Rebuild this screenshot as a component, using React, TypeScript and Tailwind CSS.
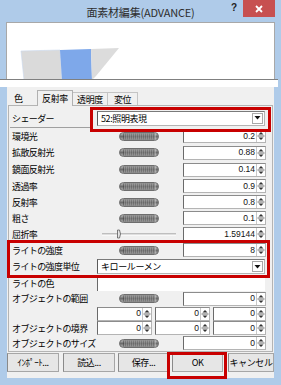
import React from "react";

const jp = "font-['Noto_Sans_CJK_JP',sans-serif]";

const Wheel: React.FC = () => {
  const ridges = [];
  for (let i = 0; i < 16; i++) {
    const x = 5 + i * 2;
    ridges.push(
      <line key={"d" + i} x1={x} y1="1.2" x2={x} y2="7.8" stroke="#333" strokeWidth="0.9" />
    );
    ridges.push(
      <line key={"l" + i} x1={x + 1} y1="1.5" x2={x + 1} y2="7.5" stroke="#e4e4e4" strokeWidth="0.7" />
    );
  }
  return (
    <svg width="40" height="9" viewBox="0 0 40 9" className="shrink-0">
      <defs>
        <linearGradient id="wheelGrad" x1="0" y1="0" x2="0" y2="1">
          <stop offset="0" stopColor="#cfcfcf" />
          <stop offset="0.5" stopColor="#6c6c6c" />
          <stop offset="1" stopColor="#bdbdbd" />
        </linearGradient>
      </defs>
      <rect x="0.5" y="0.5" width="39" height="8" rx="4" fill="url(#wheelGrad)" stroke="#6e6e6e" />
      {ridges}
    </svg>
  );
};

const Spin: React.FC = () => (
  <svg width="9" height="12" viewBox="0 0 9 12" className="shrink-0">
    <line x1="0.5" y1="0" x2="0.5" y2="12" stroke="#c8c8c8" />
    <polygon points="2.5,4.5 5,2 7.5,4.5" fill="#333" />
    <line x1="1.5" y1="6" x2="8.5" y2="6" stroke="#666" />
    <polygon points="2.5,7.5 5,10 7.5,7.5" fill="#333" />
  </svg>
);

const NumInput: React.FC<{ value: string; w?: string }> = ({ value, w = "w-[83px]" }) => (
  <div
    className={`flex items-center justify-end h-[14px] bg-white border border-[#b4b4b4] border-l-[#6a6a6a] border-t-[#8c8c8c] ${w}`}
  >
    <span className="pr-[1px] text-[8.5px] leading-none font-['Liberation_Sans',sans-serif] text-[#111]">
      {value}
    </span>
    <Spin />
  </div>
);

const Dropdown: React.FC<{ value: string }> = ({ value }) => (
  <div className="flex items-center justify-between w-[168px] h-[15px] bg-white border border-[#b4b4b4] border-l-[#5a5a5a] border-t-[#7a7a7a]">
    <span className="pl-[3px] text-[9px] leading-none tracking-[-0.4px]">{value}</span>
    <div className="mr-[1px] flex items-center justify-center w-[11px] h-[11px] border border-[#a8a8a8] bg-white">
      <svg width="7" height="4" viewBox="0 0 7 4">
        <polygon points="0.5,0 6.5,0 3.5,3.5" fill="#111" />
      </svg>
    </div>
  </div>
);

const Label: React.FC<{ text: string }> = ({ text }) => (
  <span className="w-[85px] shrink-0 text-[9px] leading-none tracking-[-0.6px] whitespace-nowrap">{text}</span>
);

const WheelRow: React.FC<{ label: string; value: string; h: string }> = ({ label, value, h }) => (
  <div className={`flex items-center ${h}`}>
    <Label text={label} />
    <div className="ml-[22px]">
      <Wheel />
    </div>
    <div className="ml-[24px]">
      <NumInput value={value} />
    </div>
  </div>
);

const Btn: React.FC<{ text: string; w: string }> = ({ text, w }) => (
  <div
    className={`flex items-center justify-center h-[19px] shrink-0 bg-[#e6e6e6] border border-[#a6a6a6] border-l-[#8a8a8a] text-[9px] tracking-[-0.4px] whitespace-nowrap ${w}`}
  >
    {text}
  </div>
);

export default function App() {
  return (
    <div className={`relative w-[281px] h-[385px] overflow-hidden bg-[#afcbe9] text-black ${jp}`}>
      {/* title bar */}
      <div className="grid grid-cols-[1fr_auto_1fr] h-[22px]">
        <div />
        <div className="pt-[5px] text-[11px] leading-[14px] tracking-[-0.2px] text-[#2e2e2e]">
          面素材編集(ADVANCE)
        </div>
        <div className="flex justify-end items-start">
          <span className="mt-[3px] mr-[6px] text-[10px] leading-[10px] font-bold text-[#222] font-['Liberation_Sans',sans-serif]">
            ?
          </span>
          <div className="mr-[6px] w-[32px] h-[17px] bg-[#c75050] flex items-center justify-center">
            <svg width="8" height="8" viewBox="0 0 8 8">
              <path d="M1 1 L7 7 M7 1 L1 7" stroke="#fff" strokeWidth="1.8" />
            </svg>
          </div>
        </div>
      </div>

      {/* preview */}
      <div className="mx-[6px] h-[57px] bg-white border-t border-x border-[#a8a8a8]">
        <svg width="268" height="56" viewBox="0 0 268 56">
          <polygon points="14,28 53,27 55,57 17,57" fill="#dadada" stroke="#c9d8ef" strokeWidth="0.6" />
          <polygon points="53,27 84,26 85,57 55,57" fill="#7ea8ea" />
          <polygon points="84,26 112,25 89,53 85,57" fill="#dcdcdc" />
        </svg>
      </div>

      {/* cut band */}
      <div className="h-[8px] mr-[3px] bg-white border-t border-[#808080]" />

      {/* dialog body */}
      <div className="mx-[7px] h-[291px] bg-[#f0f0f0] overflow-hidden pt-[3px]">
        {/* tabs */}
        <div className="flex items-end h-[15px] ml-[1px]">
          <div className="flex items-center w-[29px] h-[13px] pl-[6px] text-[9px] leading-none">色</div>
          <div className="relative z-10 -mb-px flex items-center justify-center w-[36px] h-[16px] bg-[#f0f0f0] border-x border-t border-[#b0b0b0] text-[9px] leading-none tracking-[-0.4px]">
            反射率
          </div>
          <div className="flex items-center justify-center w-[35px] h-[13px] border-r border-t border-[#c4c4c4] text-[9px] leading-none tracking-[-0.4px]">
            透明度
          </div>
          <div className="flex items-center justify-center w-[30px] h-[13px] border-r border-t border-[#c4c4c4] text-[9px] leading-none tracking-[-0.4px]">
            変位
          </div>
        </div>

        {/* panel */}
        <div className="ml-[1px] w-[265px] h-[247px] border border-[#b4b4b4] pt-[3px] pl-[3px]">
          <div className="flex items-center h-[18px]">
            <Label text="シェーダー" />
            <Dropdown value="52:照明表現" />
          </div>
          <div className="-ml-[2px] w-[80px] h-px bg-[#a0a0a0]" />

          <WheelRow label="環境光" value="0.2" h="h-[16px]" />
          <WheelRow label="拡散反射光" value="0.88" h="h-[17px]" />
          <WheelRow label="鏡面反射光" value="0.14" h="h-[17px]" />
          <WheelRow label="透過率" value="0.9" h="h-[16px]" />
          <WheelRow label="反射率" value="0.8" h="h-[16px]" />
          <WheelRow label="粗さ" value="0.1" h="h-[16px]" />

          <div className="flex items-center h-[16px]">
            <Label text="屈折率" />
            <svg width="74" height="10" viewBox="0 0 74 10" className="ml-[5px] shrink-0">
              <line x1="0" y1="5" x2="74" y2="5" stroke="#8c8c8c" />
              <line x1="0" y1="6" x2="74" y2="6" stroke="#ffffff" />
              <path d="M15.5 1 L17.5 1 L18.5 5 L17.5 9 L15.5 9 Z" fill="#e6e6e6" stroke="#5a5a5a" strokeWidth="0.8" />
            </svg>
            <div className="ml-[7px]">
              <NumInput value="1.59144" />
            </div>
          </div>

          <WheelRow label="ライトの強度" value="8" h="h-[16px]" />
          <div className="flex items-center h-[17px]">
            <Label text="ライトの強度単位" />
            <Dropdown value="キロールーメン" />
          </div>
          <div className="flex items-center h-[16px]">
            <Label text="ライトの色" />
            <div className="w-[168px] h-[15px] bg-white border-l border-[#6a6a6a]" />
          </div>
          <WheelRow label="オブジェクトの範囲" value="0" h="h-[15px]" />
          <div className="flex items-center h-[15px]">
            <span className="w-[85px] shrink-0" />
            <div className="flex gap-[3px]">
              <NumInput value="0" w="w-[55px]" />
              <NumInput value="0" w="w-[55px]" />
              <NumInput value="0" w="w-[53px]" />
            </div>
          </div>
          <div className="flex items-center h-[14px]">
            <Label text="オブジェクトの境界" />
            <div className="flex gap-[3px]">
              <NumInput value="0" w="w-[55px]" />
              <NumInput value="0" w="w-[55px]" />
              <NumInput value="0" w="w-[53px]" />
            </div>
          </div>
          <WheelRow label="オブジェクトのサイズ" value="0" h="h-[16px]" />
        </div>

        {/* buttons */}
        <div className="flex mt-[1px]">
          <Btn text="ｲﾝﾎﾟｰﾄ..." w="w-[52px]" />
          <div className="ml-[4px]">
            <Btn text="読込..." w="w-[52px]" />
          </div>
          <div className="ml-[3px]">
            <Btn text="保存..." w="w-[51px]" />
          </div>
          <div className="ml-[3px]">
            <Btn text="OK" w="w-[51px]" />
          </div>
          <div className="ml-[5px]">
            <Btn text="キャンセル" w="w-[46px]" />
          </div>
        </div>
      </div>

      {/* red annotation frames */}
      <div className="absolute left-[90px] top-[107px] w-[181px] h-[25px] border-[3px] border-[#c80000]" />
      <div className="absolute left-[7px] top-[240px] w-[263px] h-[38px] border-[3px] border-[#c80000]" />
      <div className="absolute left-[167px] top-[352px] w-[60px] h-[27px] border-[3px] border-[#c80000]" />
    </div>
  );
}
